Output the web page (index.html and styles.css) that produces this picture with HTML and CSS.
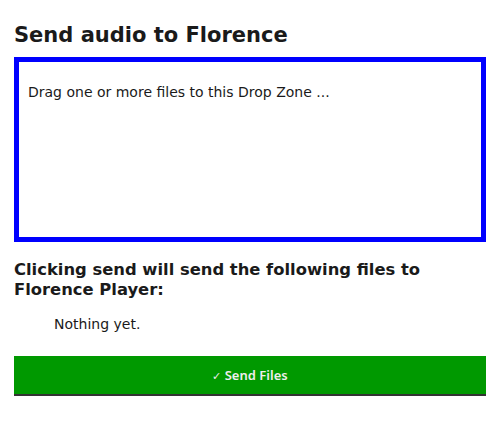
FILE: index.html
```html
<!DOCTYPE html>
<html>
<head>
<meta charset="utf-8">
<link rel="stylesheet" href="styles.css">
</head>
<body>
<div class="page">
  <h1 class="title">Send audio to Florence</h1>
  <div class="dropzone">
    <p class="dz-msg">Drag one or more files to this Drop Zone ...</p>
  </div>
  <h2 class="subtitle">Clicking send will send the following files to Florence Player:</h2>
  <ul class="files">
    <li class="empty">Nothing yet.</li>
  </ul>
  <button class="send"><span class="check">✓</span> Send Files</button>
</div>
</body>
</html>
```
FILE: styles.css
```css
html, body {
  margin: 0;
  padding: 0;
  background: #fff;
}
body {
  font-family: "DejaVu Sans", sans-serif;
  color: #1a1a1a;
}
.page {
  padding: 22px 13px 0 14px;
  display: flex;
  flex-direction: column;
}
.title {
  font-size: 21px;
  font-weight: bold;
  margin: 0;
  line-height: 26px;
  color: #1a1a1a;
}
.dropzone {
  margin-top: 9px;
  height: 175px;
  border: 5px solid #0000ff;
  padding: 0 9px;
}
.dz-msg {
  margin: 20px 0 0 0;
  font-size: 14px;
  line-height: 20px;
}
.subtitle {
  margin: 18px 0 0 0;
  font-size: 16.38px;
  font-weight: bold;
  line-height: 20px;
}
.files {
  list-style: none;
  margin: 14px 0 0 0;
  padding: 0 0 0 40px;
}
.empty {
  font-size: 14px;
  line-height: 20px;
}
.send {
  margin-top: 22px;
  height: 40px;
  border: none;
  border-bottom: 2px solid #333;
  background: #009900;
  color: #eeeeee;
  font-family: "Noto Sans", sans-serif;
  font-weight: 600;
  font-size: 13px;
  padding: 0;
}
.check {
  font-weight: 300;
  font-size: 11px;
}
```
